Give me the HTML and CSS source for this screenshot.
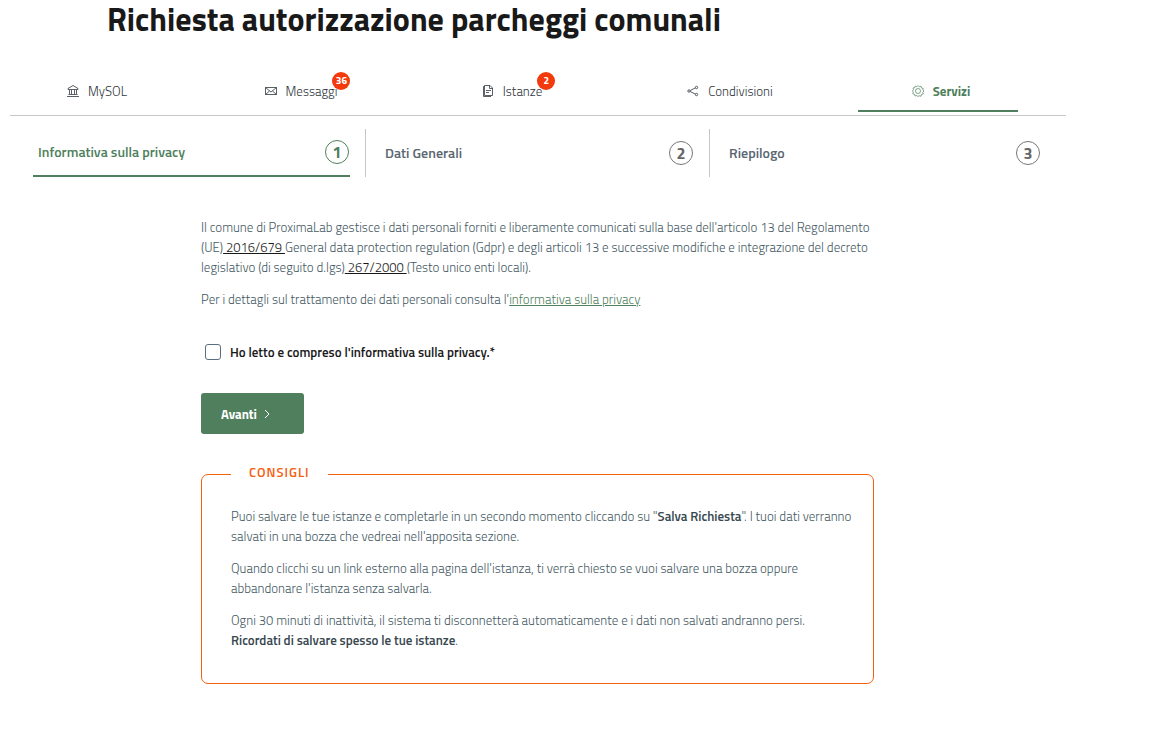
FILE: index.html
```html
<!DOCTYPE html>
<html lang="it">
<head>
    <meta charset="utf-8">
    <meta name="viewport" content="width=device-width, initial-scale=1">
    <title>Richiesta autorizzazione parcheggi comunali</title>
    <link rel="stylesheet" href="styles.css">
</head>
<body>
    <div class="page">
        <h1>Richiesta autorizzazione parcheggi comunali</h1>

        <nav class="tabs">
            <a class="tab" href="#">
                <svg class="icon" viewBox="0 0 12 12"><path d="M1 4.500V3.500L6 .5l5 3v1zM1.500 9.500h9M0 11.500h12M2.500 5v4M4.500 5v4M7.500 5v4M9.500 5v4"/></svg>
                <span>MySOL</span>
            </a>
            <a class="tab" href="#">
                <svg class="icon" viewBox="0 0 12 12"><path d="M.5 2.500h11v7H.5zM.5 2.500L6 7l5.500-4.500M.5 9.500l4-3.500M11.500 9.500l-4-3.500"/></svg>
                <span class="tab-label">Messaggi<span class="badge">36</span></span>
            </a>
            <a class="tab" href="#">
                <svg class="icon" viewBox="0 0 12 12"><path d="M2.500.5H8L10.500 3v7.500h-8zM7.500.5v3h3M2.500 1.500h-1v10H9M4 5.500h5M4 7.500h3"/></svg>
                <span class="tab-label">Istanze<span class="badge">2</span></span>
            </a>
            <a class="tab" href="#">
                <svg class="icon" viewBox="0 0 12 12"><circle cx="2" cy="6" r="1.200"/><circle cx="9.500" cy="2.500" r="1.200"/><circle cx="9.500" cy="9.500" r="1.200"/><path d="M3.200 5.500l5-2.500M3.200 6.500l5 2.500"/></svg>
                <span>Condivisioni</span>
            </a>
            <a class="tab active" href="#">
                <svg class="icon gear" viewBox="0 0 24 24"><path d="M9.500 3.500L12 1l2.500 2.500L18 2.500l1 3.500 3.500 1-1 3L24 12l-2.500 2.500 1 3.500-3.500 1-1 3.500-3.500-1L12 23l-2.500-2-3.500 1-1-3.500-3.500-1 1-3L1 12l2-2.500-1-3.500 3.500-1 1-3z"/><circle cx="12" cy="12" r="5"/></svg>
                <span>Servizi</span>
            </a>
        </nav>

        <ol class="steps">
            <li class="step current">
                <div class="step-inner"><span>Informativa sulla privacy</span><span class="number">1</span></div>
            </li>
            <li class="step">
                <div class="step-inner"><span>Dati Generali</span><span class="number">2</span></div>
            </li>
            <li class="step">
                <div class="step-inner"><span>Riepilogo</span><span class="number">3</span></div>
            </li>
        </ol>

        <form class="content">
            <p>Il comune di ProximaLab gestisce i dati personali forniti e liberamente comunicati sulla base dell'articolo 13 del Regolamento (UE)<a class="law" href="#"> 2016/679 </a>General data protection regulation (Gdpr) e degli articoli 13 e successive modifiche e integrazione del decreto legislativo (di seguito d.lgs)<a class="law" href="#"> 267/2000 </a>(Testo unico enti locali).</p>
            <p>Per i dettagli sul trattamento dei dati personali consulta l'<a class="link" href="#">informativa sulla privacy</a></p>

            <div class="check">
                <input type="checkbox" id="privacy">
                <label for="privacy">Ho letto e compreso l'informativa sulla privacy.*</label>
            </div>

            <button class="next" type="button">Avanti
                <svg class="arrow" viewBox="0 0 10 10"><path d="M3 1l4 4-4 4"/></svg>
            </button>

            <fieldset class="tips">
                <legend>CONSIGLI</legend>
                <p>Puoi salvare le tue istanze e completarle in un secondo momento cliccando su "<strong>Salva Richiesta</strong>". I tuoi dati verranno salvati in una bozza che vedreai nell'apposita sezione.</p>
                <p>Quando clicchi su un link esterno alla pagina dell'istanza, ti verrà chiesto se vuoi salvare una bozza oppure abbandonare l'istanza senza salvarla.</p>
                <p>Ogni 30 minuti di inattività, il sistema ti disconnetterà automaticamente e i dati non salvati andranno persi.<br><strong>Ricordati di salvare spesso le tue istanze</strong>.</p>
            </fieldset>
        </form>
    </div>
</body>
</html>
```
FILE: styles.css
```css
* {
    box-sizing: border-box;
}

body {
    margin: 0;
    background-color: #fff;
    color: #455a64;
    font-family: "Titillium Web", Roboto, "Liberation Sans", sans-serif;
    font-size: 13px;
    font-weight: 300;
    line-height: 20px;
}

.page {
    padding: 0 97px 0 10px;
}

h1 {
    margin: 0 97px;
    color: #19191a;
    font-size: 32px;
    font-weight: 700;
    line-height: 38px;
}

/* main tabs */
.tabs {
    display: flex;
    justify-content: space-between;
    margin-top: 34px;
    padding: 0 48px 3px 4px;
    border-bottom: 1px solid #c5c7c9;
}

.tab {
    display: flex;
    justify-content: center;
    align-items: center;
    gap: 9px;
    width: 160px;
    height: 40px;
    padding-left: 6px;
    border-bottom: 2px solid transparent;
    color: #30373d;
    text-decoration: none;
}

.tab.active {
    border-color: #4f7f5d;
    color: #4f7f5d;
    font-weight: 700;
}

.icon {
    width: 12px;
    height: 12px;
    fill: none;
    stroke: currentColor;
    stroke-width: 0.8;
}

.gear {
    stroke-width: 1.4;
}

.tab-label {
    position: relative;
    margin-right: 14px;
}

.badge {
    position: absolute;
    top: -9px;
    right: -13px;
    width: 18px;
    height: 18px;
    border-radius: 50%;
    background-color: #f23a0c;
    color: #fff;
    font-size: 10px;
    font-weight: 700;
    line-height: 18px;
    text-align: center;
}

/* wizard steps */
.steps {
    display: grid;
    grid-template-columns: repeat(3, 1fr);
    margin: 13px 12px 0;
    padding: 0;
    list-style: none;
}

.step {
    height: 48px;
    padding: 0 15px 0 11px;
    border-right: 1px solid #c5c7c9;
    color: #5a6772;
    font-size: 14px;
    font-weight: 600;
}

.step:last-child {
    padding-right: 13px;
    border-right: none;
}

.step-inner {
    display: flex;
    justify-content: space-between;
    align-items: center;
    height: 48px;
    padding: 0 1px 0 8px;
}

.current .step-inner {
    padding-left: 5px;
    border-bottom: 2px solid #4f7f5d;
    color: #4f7f5d;
}

.number {
    width: 24px;
    height: 24px;
    border: 1px solid #777;
    border-radius: 50%;
    color: #666;
    font-size: 16px;
    font-weight: 700;
    line-height: 22px;
    text-align: center;
}

.current .number {
    border-color: #4f7f5d;
    color: #4f7f5d;
}

/* form */
.content {
    margin: 40px 192px 45px 191px;
}

p {
    margin: 0 0 12px;
}

.law {
    color: #19191a;
}

.link {
    color: #4f7f5d;
}

.check {
    display: flex;
    align-items: center;
    gap: 9px;
    margin: 33px 0 31px 4px;
    color: #19191a;
    font-weight: 600;
}

.check input {
    appearance: none;
    width: 16px;
    height: 16px;
    margin: 0;
    border: 1px solid #5c6f82;
    border-radius: 3px;
}

.check input:checked {
    background-color: #4f7f5d;
}

.next {
    display: flex;
    align-items: center;
    gap: 5px;
    width: 103px;
    height: 41px;
    padding: 0 20px;
    border: none;
    border-radius: 3px;
    background-color: #4f7f5d;
    color: #fff;
    font: inherit;
    font-weight: 700;
    cursor: pointer;
}

.arrow {
    width: 10px;
    height: 10px;
    fill: none;
    stroke: #fff;
}

.tips {
    margin: 28px 0 0;
    padding: 20px 18px 21px 29px;
    border: 1px solid #f5600f;
    border-radius: 7px;
}

.tips legend {
    padding: 0 18px 4px;
    color: #f5600f;
    font-weight: 600;
    letter-spacing: 1px;
}

.tips strong {
    color: #37474f;
    font-weight: 600;
}
```
